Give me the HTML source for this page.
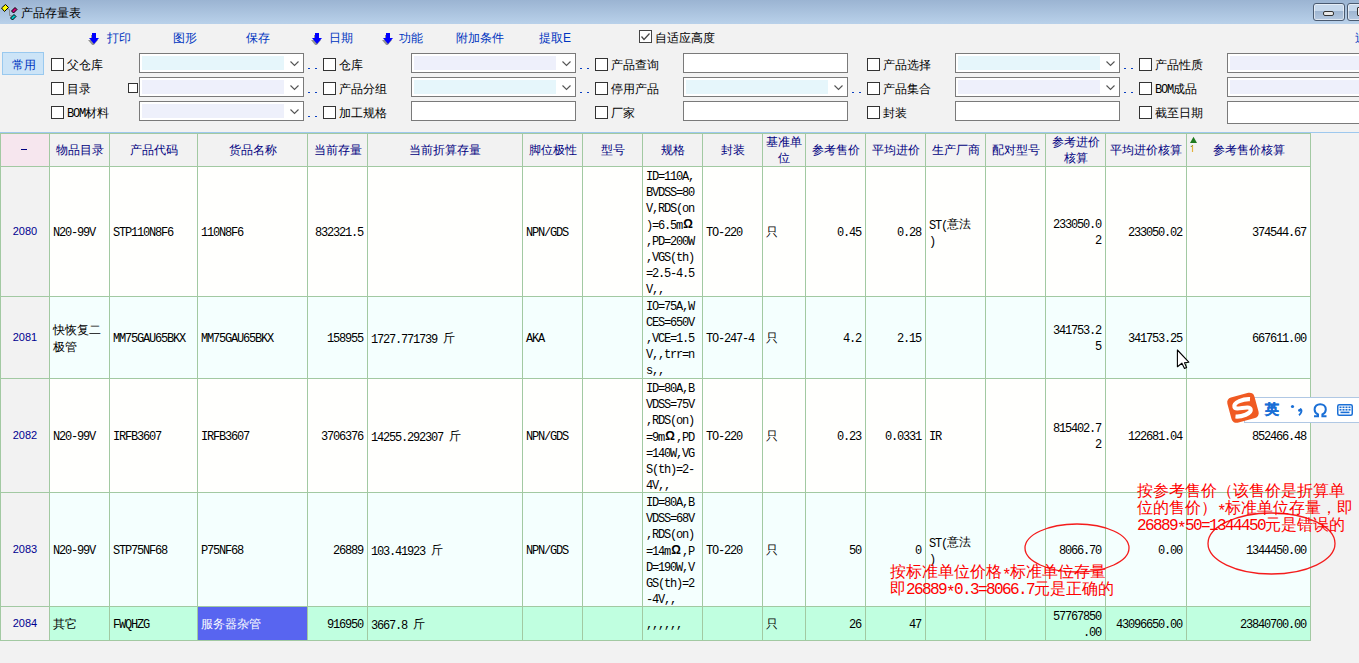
<!DOCTYPE html><html><head><meta charset="utf-8"><title>产品存量表</title><style>
*{margin:0;padding:0;box-sizing:border-box}
html,body{width:1359px;height:663px;overflow:hidden;background:#f2f2f2}
body{position:relative;font-family:"Liberation Sans",sans-serif;font-size:12px;color:#000}
.a{position:absolute}
.title{left:0;top:0;width:1359px;height:24px;background:linear-gradient(#9bb4d2,#b9d1ea)}
.tb{color:#0035c0;font-size:12px;line-height:16px;white-space:nowrap}
.lbl{font-size:12px;line-height:16px;white-space:nowrap;color:#000}
.cb{width:13px;height:13px;border:1px solid #333;background:#fff}
.combo{height:20px;border:1px solid #7a7a7a;background:#fff}
.combo .f{position:absolute;left:2px;top:2px;right:19px;bottom:2px}
.dots{width:9px;height:1px;border-left:2px solid #0a3fc0;border-right:2px solid #0a3fc0}
.cell{position:absolute;overflow:visible;white-space:nowrap;line-height:16px;font-family:"Liberation Mono",monospace;font-size:12px;letter-spacing:-1.2px;color:#000}
.cj{letter-spacing:0;font-family:"Liberation Sans",sans-serif}
.cell .cj{position:relative;top:-1px}
.hd{position:absolute;text-align:center;color:#000080;line-height:16px;white-space:nowrap}
.rn{position:absolute;text-align:center;color:#000090;font-size:11px;line-height:16px}
.red{position:absolute;color:#ff0000;font-size:16px;line-height:16px;white-space:nowrap;font-family:"Liberation Mono",monospace;letter-spacing:-1.6px}
.red .cj{letter-spacing:0}
</style></head><body>
<div class="a title"></div>
<svg class="a" style="left:0;top:0" width="20" height="22" viewBox="0 0 20 22">
<path d="M5 8 L9.5 9.5 L9.5 15.5 L12 16" stroke="#8a8a8a" stroke-width="1" fill="none"/>
<path d="M1.5 8 L5.5 4.5 L8.5 7.5 L4.5 11.5 Z" fill="#ffff00" stroke="#000" stroke-width="1" stroke-linejoin="round"/>
<path d="M11.5 11 L15 7.5 L17 9.5 L13.5 13 Z" fill="#d0007a" stroke="#000" stroke-width="1" stroke-linejoin="round"/>
<path d="M10.5 18 L14 14.5 L16 16.5 L12.5 20 Z" fill="#00c8c8" stroke="#000" stroke-width="1" stroke-linejoin="round"/>
</svg>
<div class="a lbl" style="left:21px;top:5px">产品存量表</div>
<div class="a" style="left:1313px;top:3px;width:32px;height:18px;border:1px solid #4a5a70;border-radius:3px;box-shadow:inset 0 0 0 1px rgba(255,255,255,0.55);background:linear-gradient(#c6d8ec 0%,#c6d8ec 45%,#9fb6d2 46%,#b4c8e0 100%)"><div class="a" style="left:9px;top:7px;width:11px;height:5px;background:#e8e8e8;border:1px solid #333;border-radius:2px"></div></div>
<div class="a" style="left:1347px;top:3px;width:32px;height:18px;border:1px solid #4a5a70;border-radius:3px;box-shadow:inset 0 0 0 1px rgba(255,255,255,0.55);background:linear-gradient(#c6d8ec 0%,#c6d8ec 45%,#9fb6d2 46%,#b4c8e0 100%)"><div class="a" style="left:9px;top:3px;width:11px;height:9px;background:#f0f0f0;border:1px solid #333;border-radius:1px"></div></div>
<svg class="a" style="left:88px;top:33px" width="11" height="12" viewBox="0 0 11 12"><path d="M4 1h4v5h3l-5 6-5-6h3z" fill="#555" transform="translate(-1,1)" opacity="0.6"/><path d="M4 0h4v5h3l-5 6-5-6h3z" fill="#0000ff"/></svg>
<div class="a tb" style="left:107px;top:30px">打印</div>
<div class="a tb" style="left:173px;top:30px">图形</div>
<div class="a tb" style="left:246px;top:30px">保存</div>
<svg class="a" style="left:311px;top:33px" width="11" height="12" viewBox="0 0 11 12"><path d="M4 1h4v5h3l-5 6-5-6h3z" fill="#555" transform="translate(-1,1)" opacity="0.6"/><path d="M4 0h4v5h3l-5 6-5-6h3z" fill="#0000ff"/></svg>
<div class="a tb" style="left:329px;top:30px">日期</div>
<svg class="a" style="left:382px;top:33px" width="11" height="12" viewBox="0 0 11 12"><path d="M4 1h4v5h3l-5 6-5-6h3z" fill="#555" transform="translate(-1,1)" opacity="0.6"/><path d="M4 0h4v5h3l-5 6-5-6h3z" fill="#0000ff"/></svg>
<div class="a tb" style="left:399px;top:30px">功能</div>
<div class="a tb" style="left:456px;top:30px">附加条件</div>
<div class="a tb" style="left:539px;top:30px">提取E</div>
<div class="a cb" style="left:639px;top:30px;border-color:#444"></div>
<svg class="a" style="left:639px;top:30px" width="13" height="13"><path d="M2.5 6.5 L5 9.5 L10.5 3.5" stroke="#444" stroke-width="1.2" fill="none"/></svg>
<div class="a lbl" style="left:655px;top:30px">自适应高度</div>
<div class="a tb" style="left:1355px;top:30px">过</div>
<div class="a" style="left:2px;top:52px;width:42px;height:23px;background:#cce4f7;border:1px solid #99c9ef"></div>
<div class="a tb" style="left:12px;top:57px">常用</div>
<div class="a cb" style="left:51px;top:58px"></div>
<div class="a lbl" style="left:67px;top:57px">父仓库</div>
<div class="a combo" style="left:139px;top:53px;width:165px"><div class="f" style="background:#e6f6fb"></div><svg class="a" style="right:4px;top:7px" width="9" height="6"><path d="M0.5 0.5 L4.5 4.5 L8.5 0.5" stroke="#555" stroke-width="1.1" fill="none"/></svg></div>
<div class="a dots" style="left:308px;top:68px"></div>
<div class="a cb" style="left:323px;top:58px"></div>
<div class="a lbl" style="left:339px;top:57px">仓库</div>
<div class="a combo" style="left:411px;top:53px;width:165px"><div class="f" style="background:#eef0fb"></div><svg class="a" style="right:4px;top:7px" width="9" height="6"><path d="M0.5 0.5 L4.5 4.5 L8.5 0.5" stroke="#555" stroke-width="1.1" fill="none"/></svg></div>
<div class="a dots" style="left:580px;top:68px"></div>
<div class="a cb" style="left:595px;top:58px"></div>
<div class="a lbl" style="left:611px;top:57px">产品查询</div>
<div class="a combo" style="left:683px;top:53px;width:165px;height:20px"></div>
<div class="a cb" style="left:867px;top:58px"></div>
<div class="a lbl" style="left:883px;top:57px">产品选择</div>
<div class="a combo" style="left:955px;top:53px;width:165px"><div class="f" style="background:#e6f6fb"></div><svg class="a" style="right:4px;top:7px" width="9" height="6"><path d="M0.5 0.5 L4.5 4.5 L8.5 0.5" stroke="#555" stroke-width="1.1" fill="none"/></svg></div>
<div class="a dots" style="left:1124px;top:68px"></div>
<div class="a cb" style="left:1139px;top:58px"></div>
<div class="a lbl" style="left:1155px;top:57px">产品性质</div>
<div class="a combo" style="left:1227px;top:53px;width:165px"><div class="f" style="background:#eef0fb"></div><svg class="a" style="right:4px;top:7px" width="9" height="6"><path d="M0.5 0.5 L4.5 4.5 L8.5 0.5" stroke="#555" stroke-width="1.1" fill="none"/></svg></div>
<div class="a cb" style="left:51px;top:82px"></div>
<div class="a lbl" style="left:67px;top:81px">目录</div>
<div class="a combo" style="left:139px;top:77px;width:165px"><div class="f" style="background:#eef0fb"></div><svg class="a" style="right:4px;top:7px" width="9" height="6"><path d="M0.5 0.5 L4.5 4.5 L8.5 0.5" stroke="#555" stroke-width="1.1" fill="none"/></svg></div>
<div class="a dots" style="left:308px;top:92px"></div>
<div class="a cb" style="left:323px;top:82px"></div>
<div class="a lbl" style="left:339px;top:81px">产品分组</div>
<div class="a combo" style="left:411px;top:77px;width:165px"><div class="f" style="background:#e6f6fb"></div><svg class="a" style="right:4px;top:7px" width="9" height="6"><path d="M0.5 0.5 L4.5 4.5 L8.5 0.5" stroke="#555" stroke-width="1.1" fill="none"/></svg></div>
<div class="a dots" style="left:580px;top:92px"></div>
<div class="a cb" style="left:595px;top:82px"></div>
<div class="a lbl" style="left:611px;top:81px">停用产品</div>
<div class="a combo" style="left:683px;top:77px;width:165px"><div class="f" style="background:#e6f6fb"></div><svg class="a" style="right:4px;top:7px" width="9" height="6"><path d="M0.5 0.5 L4.5 4.5 L8.5 0.5" stroke="#555" stroke-width="1.1" fill="none"/></svg></div>
<div class="a dots" style="left:852px;top:92px"></div>
<div class="a cb" style="left:867px;top:82px"></div>
<div class="a lbl" style="left:883px;top:81px">产品集合</div>
<div class="a combo" style="left:955px;top:77px;width:165px"><div class="f" style="background:#eef0fb"></div><svg class="a" style="right:4px;top:7px" width="9" height="6"><path d="M0.5 0.5 L4.5 4.5 L8.5 0.5" stroke="#555" stroke-width="1.1" fill="none"/></svg></div>
<div class="a dots" style="left:1124px;top:92px"></div>
<div class="a cb" style="left:1139px;top:82px"></div>
<div class="a lbl" style="left:1155px;top:81px"><span style="font-family:Liberation Mono,monospace;letter-spacing:-1.2px">BOM</span>成品</div>
<div class="a combo" style="left:1227px;top:77px;width:165px"><div class="f" style="background:#eef0fb"></div><svg class="a" style="right:4px;top:7px" width="9" height="6"><path d="M0.5 0.5 L4.5 4.5 L8.5 0.5" stroke="#555" stroke-width="1.1" fill="none"/></svg></div>
<div class="a cb" style="left:51px;top:106px"></div>
<div class="a lbl" style="left:67px;top:105px"><span style="font-family:Liberation Mono,monospace;letter-spacing:-1.2px">BOM</span>材料</div>
<div class="a combo" style="left:139px;top:101px;width:165px"><div class="f" style="background:#eef0fb"></div><svg class="a" style="right:4px;top:7px" width="9" height="6"><path d="M0.5 0.5 L4.5 4.5 L8.5 0.5" stroke="#555" stroke-width="1.1" fill="none"/></svg></div>
<div class="a dots" style="left:308px;top:116px"></div>
<div class="a cb" style="left:323px;top:106px"></div>
<div class="a lbl" style="left:339px;top:105px">加工规格</div>
<div class="a combo" style="left:411px;top:101px;width:165px;height:20px"></div>
<div class="a cb" style="left:595px;top:106px"></div>
<div class="a lbl" style="left:611px;top:105px">厂家</div>
<div class="a combo" style="left:683px;top:101px;width:165px;height:20px"></div>
<div class="a cb" style="left:867px;top:106px"></div>
<div class="a lbl" style="left:883px;top:105px">封装</div>
<div class="a combo" style="left:955px;top:101px;width:165px;height:20px"></div>
<div class="a cb" style="left:1139px;top:106px"></div>
<div class="a lbl" style="left:1155px;top:105px">截至日期</div>
<div class="a combo" style="left:1227px;top:101px;width:165px;height:23px"></div>
<div class="a" style="left:128px;top:83px;width:10px;height:10px;border:1px solid #333;background:#fff"></div>
<div class="a" style="left:0;top:132px;width:1359px;height:1px;background:#9ec8ee"></div>
<div class="a" style="left:0;top:134px;width:1310px;height:32px;background:#f2f2f2"></div>
<div class="a" style="left:1px;top:134px;width:48px;height:32px;background:#f6e6ee"></div>
<div class="a" style="left:50px;top:167px;width:1260px;height:129px;background:#fffffd"></div>
<div class="a" style="left:1px;top:167px;width:48px;height:129px;background:#f2f2f2"></div>
<div class="a" style="left:50px;top:297px;width:1260px;height:81px;background:#f4fffe"></div>
<div class="a" style="left:1px;top:297px;width:48px;height:81px;background:#f2f2f2"></div>
<div class="a" style="left:50px;top:379px;width:1260px;height:113px;background:#fffffd"></div>
<div class="a" style="left:1px;top:379px;width:48px;height:113px;background:#f2f2f2"></div>
<div class="a" style="left:50px;top:493px;width:1260px;height:113px;background:#f4fffe"></div>
<div class="a" style="left:1px;top:493px;width:48px;height:113px;background:#f2f2f2"></div>
<div class="a" style="left:50px;top:607px;width:1260px;height:33px;background:#c0ffe0"></div>
<div class="a" style="left:1px;top:607px;width:48px;height:33px;background:#f2f2f2"></div>
<div class="a" style="left:198px;top:607px;width:109px;height:33px;background:#5865f0"></div>
<div class="a" style="left:0px;top:133px;width:1px;height:508px;background:#a2c9a2"></div>
<div class="a" style="left:49px;top:133px;width:1px;height:508px;background:#a2c9a2"></div>
<div class="a" style="left:109px;top:133px;width:1px;height:508px;background:#a2c9a2"></div>
<div class="a" style="left:197px;top:133px;width:1px;height:508px;background:#a2c9a2"></div>
<div class="a" style="left:307px;top:133px;width:1px;height:508px;background:#a2c9a2"></div>
<div class="a" style="left:367px;top:133px;width:1px;height:508px;background:#a2c9a2"></div>
<div class="a" style="left:522px;top:133px;width:1px;height:508px;background:#a2c9a2"></div>
<div class="a" style="left:582px;top:133px;width:1px;height:508px;background:#a2c9a2"></div>
<div class="a" style="left:642px;top:133px;width:1px;height:508px;background:#a2c9a2"></div>
<div class="a" style="left:702px;top:133px;width:1px;height:508px;background:#a2c9a2"></div>
<div class="a" style="left:762px;top:133px;width:1px;height:508px;background:#a2c9a2"></div>
<div class="a" style="left:805px;top:133px;width:1px;height:508px;background:#a2c9a2"></div>
<div class="a" style="left:865px;top:133px;width:1px;height:508px;background:#a2c9a2"></div>
<div class="a" style="left:925px;top:133px;width:1px;height:508px;background:#a2c9a2"></div>
<div class="a" style="left:985px;top:133px;width:1px;height:508px;background:#a2c9a2"></div>
<div class="a" style="left:1045px;top:133px;width:1px;height:508px;background:#a2c9a2"></div>
<div class="a" style="left:1105px;top:133px;width:1px;height:508px;background:#a2c9a2"></div>
<div class="a" style="left:1186px;top:133px;width:1px;height:508px;background:#a2c9a2"></div>
<div class="a" style="left:1310px;top:133px;width:1px;height:508px;background:#a2c9a2"></div>
<div class="a" style="left:0;top:133px;width:1311px;height:1px;background:#a2c9a2"></div>
<div class="a" style="left:0;top:166px;width:1311px;height:1px;background:#a2c9a2"></div>
<div class="a" style="left:0;top:296px;width:1311px;height:1px;background:#a2c9a2"></div>
<div class="a" style="left:0;top:378px;width:1311px;height:1px;background:#a2c9a2"></div>
<div class="a" style="left:0;top:492px;width:1311px;height:1px;background:#a2c9a2"></div>
<div class="a" style="left:0;top:606px;width:1311px;height:1px;background:#a2c9a2"></div>
<div class="a" style="left:0;top:640px;width:1311px;height:1px;background:#a2c9a2"></div>
<div class="a" style="left:21px;top:149px;width:6px;height:1px;background:#000080"></div>
<div class="hd" style="left:50px;top:142px;width:59px">物品目录</div>
<div class="hd" style="left:110px;top:142px;width:87px">产品代码</div>
<div class="hd" style="left:198px;top:142px;width:109px">货品名称</div>
<div class="hd" style="left:308px;top:142px;width:59px">当前存量</div>
<div class="hd" style="left:368px;top:142px;width:154px">当前折算存量</div>
<div class="hd" style="left:523px;top:142px;width:59px">脚位极性</div>
<div class="hd" style="left:583px;top:142px;width:59px">型号</div>
<div class="hd" style="left:643px;top:142px;width:59px">规格</div>
<div class="hd" style="left:703px;top:142px;width:59px">封装</div>
<div class="hd" style="left:763px;top:134px;width:42px">基准单<br>位</div>
<div class="hd" style="left:806px;top:142px;width:59px">参考售价</div>
<div class="hd" style="left:866px;top:142px;width:59px">平均进价</div>
<div class="hd" style="left:926px;top:142px;width:59px">生产厂商</div>
<div class="hd" style="left:986px;top:142px;width:59px">配对型号</div>
<div class="hd" style="left:1046px;top:134px;width:59px">参考进价<br>核算</div>
<div class="hd" style="left:1106px;top:142px;width:80px">平均进价核算</div>
<div class="hd" style="left:1187px;top:142px;width:123px">参考售价核算</div>
<svg class="a" style="left:1190px;top:136px" width="9" height="17"><path d="M3.5 0.8 L7 7 L0 7 Z" fill="#1f7a1f"/><path d="M2.5 9 L2.5 16" stroke="#e3b23c" stroke-width="1.2" fill="none"/><path d="M0.8 11 L2.5 9.3" stroke="#6a8a30" stroke-width="1" fill="none"/></svg>
<div class="rn" style="left:1px;top:223px;width:48px">2080</div>
<div class="cell" style="left:50px;top:225px;width:59px;text-align:left;padding-left:3px">N20-99V</div>
<div class="cell" style="left:110px;top:225px;width:87px;text-align:left;padding-left:3px">STP110N8F6</div>
<div class="cell" style="left:198px;top:225px;width:109px;text-align:left;padding-left:3px">110N8F6</div>
<div class="cell" style="left:308px;top:225px;width:59px;text-align:right;padding-right:4px">832321.5</div>
<div class="cell" style="left:523px;top:225px;width:59px;text-align:left;padding-left:3px">NPN/GDS</div>
<div class="cell" style="left:643px;top:169px;width:59px;text-align:left;padding-left:3px">ID=110A,<br>BVDSS=80<br>V,RDS(on<br>)=6.5m<span class="cj" style="display:inline-block;width:12px;text-align:center;font-weight:bold">Ω</span><br>,PD=200W<br>,VGS(th)<br>=2.5-4.5<br>V,,</div>
<div class="cell" style="left:703px;top:225px;width:59px;text-align:left;padding-left:3px">TO-220</div>
<div class="cell" style="left:763px;top:225px;width:42px;text-align:left;padding-left:3px"><span class="cj">只</span></div>
<div class="cell" style="left:806px;top:225px;width:59px;text-align:right;padding-right:4px">0.45</div>
<div class="cell" style="left:866px;top:225px;width:59px;text-align:right;padding-right:4px">0.28</div>
<div class="cell" style="left:926px;top:217px;width:59px;text-align:left;padding-left:3px">ST(<span class="cj">意</span><span class="cj">法</span><br>)</div>
<div class="cell" style="left:1046px;top:217px;width:59px;text-align:right;padding-right:4px">233050.0<br>2</div>
<div class="cell" style="left:1106px;top:225px;width:80px;text-align:right;padding-right:4px">233050.02</div>
<div class="cell" style="left:1187px;top:225px;width:123px;text-align:right;padding-right:4px">374544.67</div>
<div class="rn" style="left:1px;top:329px;width:48px">2081</div>
<div class="cell" style="left:50px;top:323px;width:59px;text-align:left;padding-left:3px"><span class="cj">快</span><span class="cj">恢</span><span class="cj">复</span><span class="cj">二</span><br><span class="cj">极</span><span class="cj">管</span></div>
<div class="cell" style="left:110px;top:331px;width:87px;text-align:left;padding-left:3px">MM75GAU65BKX</div>
<div class="cell" style="left:198px;top:331px;width:109px;text-align:left;padding-left:3px">MM75GAU65BKX</div>
<div class="cell" style="left:308px;top:331px;width:59px;text-align:right;padding-right:4px">158955</div>
<div class="cell" style="left:368px;top:331px;width:154px;text-align:left;padding-left:3px">1727.771739 <span class="cj">斤</span></div>
<div class="cell" style="left:523px;top:331px;width:59px;text-align:left;padding-left:3px">AKA</div>
<div class="cell" style="left:643px;top:299px;width:59px;text-align:left;padding-left:3px">IO=75A,W<br>CES=650V<br>,VCE=1.5<br>V,,trr=n<br>s,,</div>
<div class="cell" style="left:703px;top:331px;width:59px;text-align:left;padding-left:3px">TO-247-4</div>
<div class="cell" style="left:763px;top:331px;width:42px;text-align:left;padding-left:3px"><span class="cj">只</span></div>
<div class="cell" style="left:806px;top:331px;width:59px;text-align:right;padding-right:4px">4.2</div>
<div class="cell" style="left:866px;top:331px;width:59px;text-align:right;padding-right:4px">2.15</div>
<div class="cell" style="left:1046px;top:323px;width:59px;text-align:right;padding-right:4px">341753.2<br>5</div>
<div class="cell" style="left:1106px;top:331px;width:80px;text-align:right;padding-right:4px">341753.25</div>
<div class="cell" style="left:1187px;top:331px;width:123px;text-align:right;padding-right:4px">667611.00</div>
<div class="rn" style="left:1px;top:427px;width:48px">2082</div>
<div class="cell" style="left:50px;top:429px;width:59px;text-align:left;padding-left:3px">N20-99V</div>
<div class="cell" style="left:110px;top:429px;width:87px;text-align:left;padding-left:3px">IRFB3607</div>
<div class="cell" style="left:198px;top:429px;width:109px;text-align:left;padding-left:3px">IRFB3607</div>
<div class="cell" style="left:308px;top:429px;width:59px;text-align:right;padding-right:4px">3706376</div>
<div class="cell" style="left:368px;top:429px;width:154px;text-align:left;padding-left:3px">14255.292307 <span class="cj">斤</span></div>
<div class="cell" style="left:523px;top:429px;width:59px;text-align:left;padding-left:3px">NPN/GDS</div>
<div class="cell" style="left:643px;top:381px;width:59px;text-align:left;padding-left:3px">ID=80A,B<br>VDSS=75V<br>,RDS(on)<br>=9m<span class="cj" style="display:inline-block;width:12px;text-align:center;font-weight:bold">Ω</span>,PD<br>=140W,VG<br>S(th)=2-<br>4V,,</div>
<div class="cell" style="left:703px;top:429px;width:59px;text-align:left;padding-left:3px">TO-220</div>
<div class="cell" style="left:763px;top:429px;width:42px;text-align:left;padding-left:3px"><span class="cj">只</span></div>
<div class="cell" style="left:806px;top:429px;width:59px;text-align:right;padding-right:4px">0.23</div>
<div class="cell" style="left:866px;top:429px;width:59px;text-align:right;padding-right:4px">0.0331</div>
<div class="cell" style="left:926px;top:429px;width:59px;text-align:left;padding-left:3px">IR</div>
<div class="cell" style="left:1046px;top:421px;width:59px;text-align:right;padding-right:4px">815402.7<br>2</div>
<div class="cell" style="left:1106px;top:429px;width:80px;text-align:right;padding-right:4px">122681.04</div>
<div class="cell" style="left:1187px;top:429px;width:123px;text-align:right;padding-right:4px">852466.48</div>
<div class="rn" style="left:1px;top:541px;width:48px">2083</div>
<div class="cell" style="left:50px;top:543px;width:59px;text-align:left;padding-left:3px">N20-99V</div>
<div class="cell" style="left:110px;top:543px;width:87px;text-align:left;padding-left:3px">STP75NF68</div>
<div class="cell" style="left:198px;top:543px;width:109px;text-align:left;padding-left:3px">P75NF68</div>
<div class="cell" style="left:308px;top:543px;width:59px;text-align:right;padding-right:4px">26889</div>
<div class="cell" style="left:368px;top:543px;width:154px;text-align:left;padding-left:3px">103.41923 <span class="cj">斤</span></div>
<div class="cell" style="left:523px;top:543px;width:59px;text-align:left;padding-left:3px">NPN/GDS</div>
<div class="cell" style="left:643px;top:495px;width:59px;text-align:left;padding-left:3px">ID=80A,B<br>VDSS=68V<br>,RDS(on)<br>=14m<span class="cj" style="display:inline-block;width:12px;text-align:center;font-weight:bold">Ω</span>,P<br>D=190W,V<br>GS(th)=2<br>-4V,,</div>
<div class="cell" style="left:703px;top:543px;width:59px;text-align:left;padding-left:3px">TO-220</div>
<div class="cell" style="left:763px;top:543px;width:42px;text-align:left;padding-left:3px"><span class="cj">只</span></div>
<div class="cell" style="left:806px;top:543px;width:59px;text-align:right;padding-right:4px">50</div>
<div class="cell" style="left:866px;top:543px;width:59px;text-align:right;padding-right:4px">0</div>
<div class="cell" style="left:926px;top:535px;width:59px;text-align:left;padding-left:3px">ST(<span class="cj">意</span><span class="cj">法</span><br>)</div>
<div class="cell" style="left:1046px;top:543px;width:59px;text-align:right;padding-right:4px">8066.70</div>
<div class="cell" style="left:1106px;top:543px;width:80px;text-align:right;padding-right:4px">0.00</div>
<div class="cell" style="left:1187px;top:543px;width:123px;text-align:right;padding-right:4px">1344450.00</div>
<div class="rn" style="left:1px;top:615px;width:48px">2084</div>
<div class="cell" style="left:50px;top:617px;width:59px;text-align:left;padding-left:3px"><span class="cj">其</span><span class="cj">它</span></div>
<div class="cell" style="left:110px;top:617px;width:87px;text-align:left;padding-left:3px">FWQHZG</div>
<div class="cell" style="left:198px;top:617px;width:109px;text-align:left;padding-left:3px;color:#fff"><span class="cj">服</span><span class="cj">务</span><span class="cj">器</span><span class="cj">杂</span><span class="cj">管</span></div>
<div class="cell" style="left:308px;top:617px;width:59px;text-align:right;padding-right:4px">916950</div>
<div class="cell" style="left:368px;top:617px;width:154px;text-align:left;padding-left:3px">3667.8 <span class="cj">斤</span></div>
<div class="cell" style="left:643px;top:617px;width:59px;text-align:left;padding-left:3px">,,,,,,</div>
<div class="cell" style="left:763px;top:617px;width:42px;text-align:left;padding-left:3px"><span class="cj">只</span></div>
<div class="cell" style="left:806px;top:617px;width:59px;text-align:right;padding-right:4px">26</div>
<div class="cell" style="left:866px;top:617px;width:59px;text-align:right;padding-right:4px">47</div>
<div class="cell" style="left:1046px;top:609px;width:59px;text-align:right;padding-right:4px">57767850<br>.00</div>
<div class="cell" style="left:1106px;top:617px;width:80px;text-align:right;padding-right:4px">43096650.00</div>
<div class="cell" style="left:1187px;top:617px;width:123px;text-align:right;padding-right:4px">23840700.00</div>
<svg class="a" style="left:0;top:0" width="1359" height="663"><ellipse cx="1077" cy="548" rx="52" ry="24" fill="none" stroke="#f41c1c" stroke-width="1.3"/><ellipse cx="1271.5" cy="543.5" rx="63.5" ry="30.5" fill="none" stroke="#f41c1c" stroke-width="1.3"/></svg>
<div class="red" style="left:890px;top:564px"><span class="cj">按</span><span class="cj">标</span><span class="cj">准</span><span class="cj">单</span><span class="cj">位</span><span class="cj">价</span><span class="cj">格</span><span style="position:relative;top:3px">*</span><span class="cj">标</span><span class="cj">准</span><span class="cj">单</span><span class="cj">位</span><span class="cj">存</span><span class="cj">量</span><br><span class="cj">即</span>26889<span style="position:relative;top:3px">*</span>0.3=8066.7<span class="cj">元</span><span class="cj">是</span><span class="cj">正</span><span class="cj">确</span><span class="cj">的</span></div>
<div class="red" style="left:1137px;top:483px"><span class="cj">按</span><span class="cj">参</span><span class="cj">考</span><span class="cj">售</span><span class="cj">价</span><span class="cj">（</span><span class="cj">该</span><span class="cj">售</span><span class="cj">价</span><span class="cj">是</span><span class="cj">折</span><span class="cj">算</span><span class="cj">单</span><br><span class="cj">位</span><span class="cj">的</span><span class="cj">售</span><span class="cj">价</span><span class="cj">）</span><span style="position:relative;top:3px">*</span><span class="cj">标</span><span class="cj">准</span><span class="cj">单</span><span class="cj">位</span><span class="cj">存</span><span class="cj">量</span><span class="cj">，</span><span class="cj">即</span><br>26889<span style="position:relative;top:3px">*</span>50=1344450<span class="cj">元</span><span class="cj">是</span><span class="cj">错</span><span class="cj">误</span><span class="cj">的</span></div>
<div class="a" style="left:1244px;top:397px;width:120px;height:26px;background:#fff;border:1px solid #b0c8e4"></div>
<svg class="a" style="left:1225px;top:391px" width="36" height="34" viewBox="0 0 36 34"><g transform="rotate(-15 17 17)"><rect x="4" y="4" width="28" height="26" rx="5" fill="#f05a22"/><path d="M27 10.5 C21 8.5 10 9 10 14 C10 18.5 25 15.5 25 20.5 C25 25 14 25.5 8.5 23.5" stroke="#fff" stroke-width="4.2" fill="none"/></g></svg>
<div class="a" style="left:1265px;top:401px;color:#1a6fd6;font-weight:bold;font-size:14px;line-height:16px;-webkit-text-stroke:0.4px #1a6fd6">英</div>
<svg class="a" style="left:1290px;top:404px" width="14" height="14"><circle cx="2.5" cy="2.5" r="1.6" fill="#1a6fd6"/><path d="M10 5 C11.5 5 11.8 6.5 11.3 8 C10.8 9.5 10 10.5 9 11.3" stroke="#1a6fd6" stroke-width="1.8" fill="none"/><circle cx="9.6" cy="6.2" r="1.5" fill="#1a6fd6"/></svg>
<svg class="a" style="left:1313px;top:403px" width="15" height="15"><path d="M1 13.2 L5 13.2 L5 11.5 C2.5 10.3 1.6 8.3 1.6 6.5 C1.6 3.2 4.2 1.2 7.2 1.2 C10.2 1.2 12.8 3.2 12.8 6.5 C12.8 8.3 11.9 10.3 9.4 11.5 L9.4 13.2 L13.5 13.2" stroke="#1a6fd6" stroke-width="2" fill="none"/></svg>
<svg class="a" style="left:1337px;top:404px" width="16" height="12"><rect x="0.75" y="0.75" width="14.5" height="10.5" rx="1.5" fill="none" stroke="#1a6fd6" stroke-width="1.5"/><g fill="#1a6fd6"><rect x="2.5" y="2.5" width="2" height="1.6"/><rect x="5.5" y="2.5" width="2" height="1.6"/><rect x="8.5" y="2.5" width="2" height="1.6"/><rect x="11.5" y="2.5" width="2" height="1.6"/><rect x="2.5" y="5" width="2" height="1.6"/><rect x="5.5" y="5" width="2" height="1.6"/><rect x="8.5" y="5" width="2" height="1.6"/><rect x="11.5" y="5" width="2" height="1.6"/><rect x="3.5" y="7.6" width="9" height="1.6"/></g></svg>
<svg class="a" style="left:1176px;top:349px" width="16" height="22" viewBox="0 0 16 22"><path d="M1.4 1 L1.4 17.7 L5.9 14.2 L8.5 19.5 L10.6 18.5 L8.5 13.7 L12.8 13.2 Z" fill="#fff" stroke="#000" stroke-width="1.1" stroke-linejoin="round"/></svg>
</body></html>
